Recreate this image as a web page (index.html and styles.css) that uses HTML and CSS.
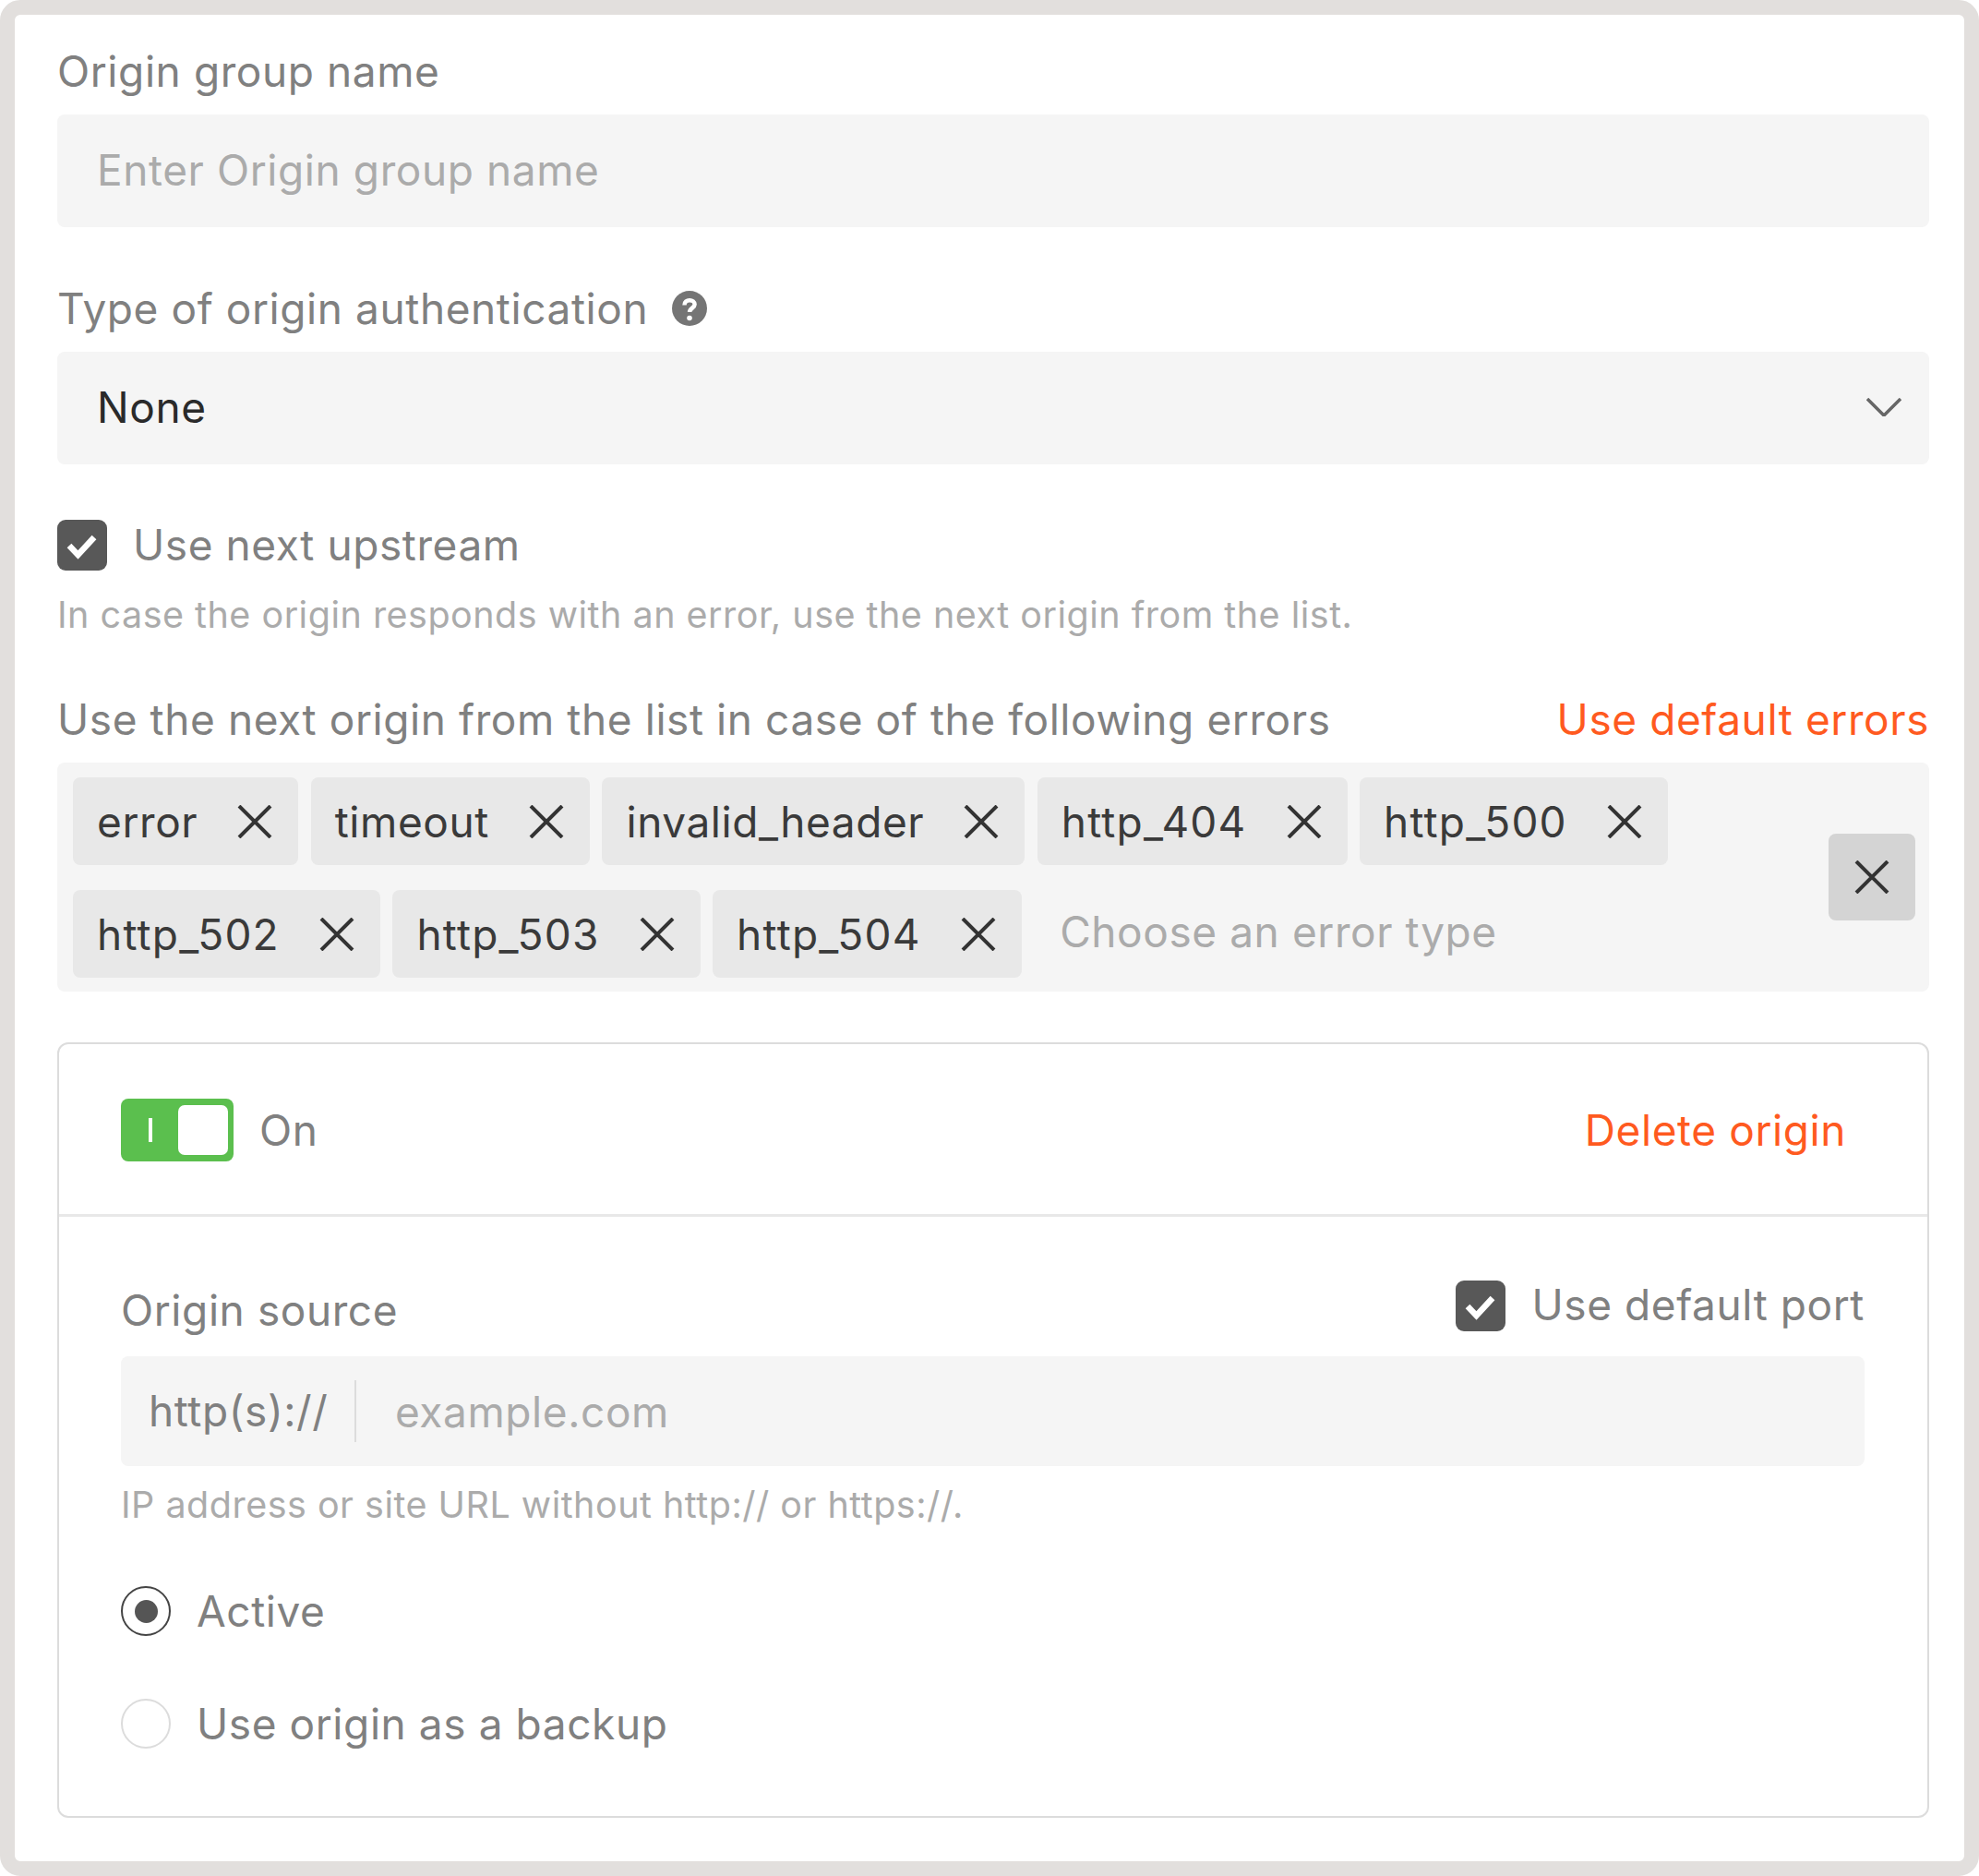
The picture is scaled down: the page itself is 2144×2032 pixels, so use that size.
FILE: index.html
```html
<!DOCTYPE html>
<html lang="en">
<head>
    <meta charset="UTF-8">
    <title>Origin group</title>
    <link rel="stylesheet" href="styles.css">
</head>
<body>
    <div class="frame">
        <div class="label">Origin group name</div>
        <div class="field placeholder">Enter Origin group name</div>

        <div class="label label-help">
            Type of origin authentication
            <svg class="help-icon" viewBox="0 0 38 38">
                <circle cx="19" cy="19" r="19" fill="#757575"/>
                <path d="M13.500 15.500c0-3.500 2.500-5.200 5.600-5.200s5.500 1.800 5.500 4.500c0 3.700-5.500 4-5.500 8.200" fill="none" stroke="#fff" stroke-width="4.500"/>
                <circle cx="19" cy="29.500" r="2.800" fill="#fff"/>
            </svg>
        </div>
        <div class="field select">
            <span>None</span>
            <svg class="chevron" viewBox="0 0 38 20">
                <path d="M1 1l18 18L37 1" fill="none" stroke="#666" stroke-width="3.500"/>
            </svg>
        </div>

        <div class="check-row upstream">
            <span class="checkbox">
                <svg viewBox="0 0 54 54"><path d="M13 28l9.500 10L40 19" fill="none" stroke="#fff" stroke-width="6.500"/></svg>
            </span>
            <span class="label">Use next upstream</span>
        </div>
        <div class="hint upstream-hint">In case the origin responds with an error, use the next origin from the list.</div>

        <div class="label errors-head">
            <span>Use the next origin from the list in case of the following errors</span>
            <span class="link">Use default errors</span>
        </div>
        <div class="tag-box">
            <div class="tags">
                <div class="tag-row">
                    <span class="tag">error<svg class="x" viewBox="0 0 38 36"><path d="M2 1l34 34M36 1L2 35"/></svg></span>
                    <span class="tag">timeout<svg class="x" viewBox="0 0 38 36"><path d="M2 1l34 34M36 1L2 35"/></svg></span>
                    <span class="tag">invalid_header<svg class="x" viewBox="0 0 38 36"><path d="M2 1l34 34M36 1L2 35"/></svg></span>
                    <span class="tag tag-code">http_404<svg class="x" viewBox="0 0 38 36"><path d="M2 1l34 34M36 1L2 35"/></svg></span>
                    <span class="tag tag-code">http_500<svg class="x" viewBox="0 0 38 36"><path d="M2 1l34 34M36 1L2 35"/></svg></span>
                </div>
                <div class="tag-row">
                    <span class="tag tag-code">http_502<svg class="x" viewBox="0 0 38 36"><path d="M2 1l34 34M36 1L2 35"/></svg></span>
                    <span class="tag tag-code">http_503<svg class="x" viewBox="0 0 38 36"><path d="M2 1l34 34M36 1L2 35"/></svg></span>
                    <span class="tag tag-code">http_504<svg class="x" viewBox="0 0 38 36"><path d="M2 1l34 34M36 1L2 35"/></svg></span>
                    <span class="placeholder choose">Choose an error type</span>
                </div>
            </div>
            <div class="clear-all"><svg class="x" viewBox="0 0 38 36"><path d="M2 1l34 34M36 1L2 35"/></svg></div>
        </div>

        <div class="card">
            <div class="card-head">
                <div class="toggle-wrap">
                    <div class="toggle"><i class="toggle-bar"></i><i class="toggle-knob"></i></div>
                    <span class="label">On</span>
                </div>
                <span class="link">Delete origin</span>
            </div>
            <div class="card-body">
                <div class="source-head">
                    <span class="label">Origin source</span>
                    <div class="check-row port">
                        <span class="checkbox">
                            <svg viewBox="0 0 54 54"><path d="M13 28l9.500 10L40 19" fill="none" stroke="#fff" stroke-width="6.500"/></svg>
                        </span>
                        <span class="label">Use default port</span>
                    </div>
                </div>
                <div class="source-field">
                    <span class="prefix">http(s)://</span>
                    <span class="placeholder">example.com</span>
                </div>
                <div class="hint source-hint">IP address or site URL without http:// or https://.</div>
                <div class="radio-row active">
                    <span class="radio radio-on"></span>
                    <span class="label">Active</span>
                </div>
                <div class="radio-row backup">
                    <span class="radio"></span>
                    <span class="label">Use origin as a backup</span>
                </div>
            </div>
        </div>
    </div>
</body>
</html>
```

FILE: styles.css
```css
* {
    box-sizing: border-box;
    margin: 0;
    padding: 0;
}

body {
    font-family: 'Inter', sans-serif;
    background-color: #fff;
}

.frame {
    height: 2032px;
    border: 16px solid #e2dfdd;
    border-radius: 22px;
    padding: 31px 38px 0 46px;
    font-size: 46px;
    letter-spacing: 0.58px;
    color: #808080;
}

.label {
    font-size: 46px;
    line-height: 60px;
    color: #808080;
}

.placeholder {
    color: #ababab;
}

.field {
    display: flex;
    align-items: center;
    height: 122px;
    margin-top: 17px;
    padding: 0 43px 2px;
    background-color: #f5f5f5;
    border-radius: 8px;
    line-height: 60px;
}

.label-help {
    display: flex;
    align-items: center;
    gap: 26px;
    margin-top: 58px;
}

.help-icon {
    width: 38px;
    height: 38px;
}

.select {
    justify-content: space-between;
    padding-right: 30px;
    color: #2a2a2a;
}

.chevron {
    width: 38px;
    height: 20px;
}

.check-row {
    display: flex;
    align-items: center;
    gap: 28px;
}

.check-row .label {
    margin-bottom: 2px;
}

.upstream {
    margin-top: 60px;
    height: 55px;
}

.checkbox {
    width: 54px;
    height: 55px;
    background-color: #585858;
    border-radius: 9px;
}

.checkbox svg {
    display: block;
    width: 54px;
    height: 54px;
}

.hint {
    font-size: 39.5px;
    letter-spacing: 0.49px;
    line-height: 50px;
    color: #ababab;
}

.upstream-hint {
    margin-top: 23px;
}

.errors-head {
    display: flex;
    justify-content: space-between;
    margin-top: 58px;
}

.link {
    color: #ff5a1f;
}

.tag-box {
    display: flex;
    align-items: center;
    justify-content: space-between;
    height: 248px;
    margin-top: 17px;
    padding: 0 15px 0 17px;
    background-color: #f5f5f5;
    border-radius: 8px;
}

.tags {
    display: flex;
    flex-direction: column;
    gap: 27px;
}

.tag-row {
    display: flex;
    align-items: center;
    gap: 13.5px;
}

.tag {
    display: flex;
    align-items: center;
    gap: 43px;
    height: 95px;
    padding: 2px 28px 0 26px;
    background-color: #e8e8e8;
    border-radius: 8px;
    color: #3a3a3a;
}

.tag-code {
    letter-spacing: 1.2px;
}

.choose {
    margin-left: 28px;
    margin-bottom: 5px;
}

.x {
    width: 38px;
    height: 36px;
    fill: none;
    stroke: #333;
    stroke-width: 4;
}

.clear-all {
    display: flex;
    align-items: center;
    justify-content: center;
    width: 94px;
    height: 94px;
    background-color: #d4d4d4;
    border-radius: 8px;
}

.card {
    height: 840px;
    margin-top: 55px;
    border: 2px solid #dcdcdc;
    border-radius: 12px;
}

.card-head {
    display: flex;
    align-items: center;
    justify-content: space-between;
    height: 187px;
    padding: 2px 88px 0 67px;
    border-bottom: 3px solid #e8e8e8;
}

.toggle-wrap {
    display: flex;
    align-items: center;
    gap: 28px;
}

.toggle {
    display: flex;
    align-items: center;
    justify-content: space-between;
    width: 122px;
    height: 68px;
    padding: 0 6px 0 30px;
    background-color: #5bbf4e;
    border-radius: 8px;
}

.toggle-bar {
    width: 4px;
    height: 26px;
    background-color: #fff;
}

.toggle-knob {
    width: 54px;
    height: 54px;
    background-color: #fff;
    border-radius: 7px;
}

.card-body {
    padding: 65px 68px 0 67px;
}

.source-head {
    display: flex;
    align-items: flex-start;
    justify-content: space-between;
    height: 66px;
}

.source-head > .label {
    align-self: flex-end;
}

.source-field {
    display: flex;
    align-items: center;
    height: 119px;
    margin-top: 20px;
    padding-left: 30px;
    background-color: #f5f5f5;
    border-radius: 8px;
}

.prefix {
    width: 225px;
    line-height: 67px;
    margin-right: 42px;
    border-right: 2px solid #dcdcdc;
}

.source-hint {
    margin-top: 17px;
}

.radio-row {
    display: flex;
    align-items: center;
    gap: 28px;
    height: 54px;
}

.active {
    margin-top: 63px;
}

.backup {
    margin-top: 68px;
}

.radio {
    width: 54px;
    height: 54px;
    border: 2px solid #dcdcdc;
    border-radius: 50%;
}

.radio-on {
    display: flex;
    align-items: center;
    justify-content: center;
    border-color: #444;
}

.radio-on::after {
    content: "";
    width: 25px;
    height: 25px;
    background-color: #555;
    border-radius: 50%;
}
```
